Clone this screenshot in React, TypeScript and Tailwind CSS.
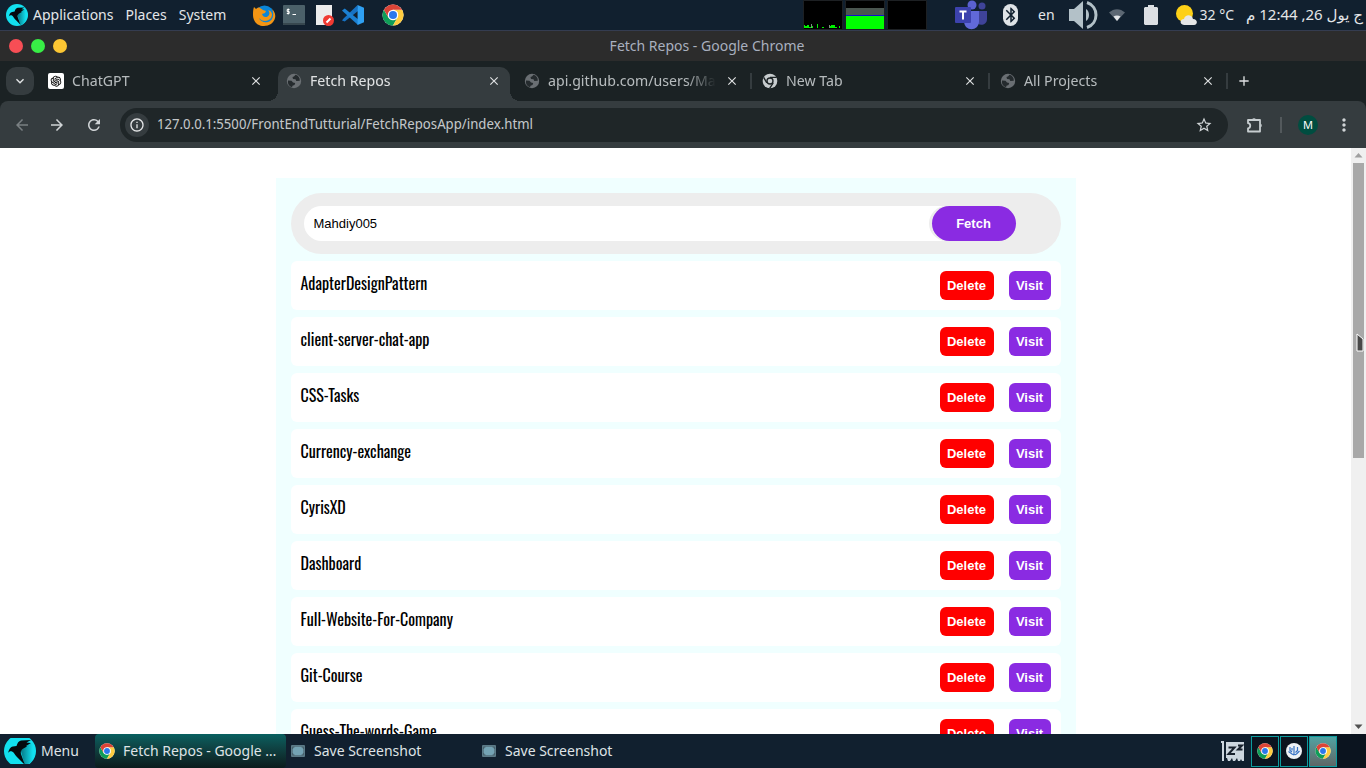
import type { ReactNode } from "react";
import { AiOutlineOpenAI } from "react-icons/ai";
import {
  MdAdd,
  MdArrowBack,
  MdArrowForward,
  MdBluetooth,
  MdClose,
  MdKeyboardArrowDown,
  MdMoreVert,
  MdOutlineInfo,
  MdRefresh,
  MdStarBorder,
} from "react-icons/md";

const repos = [
  "AdapterDesignPattern",
  "client-server-chat-app",
  "CSS-Tasks",
  "Currency-exchange",
  "CyrisXD",
  "Dashboard",
  "Full-Website-For-Company",
  "Git-Course",
  "Guess-The-words-Game",
];

function ChromeLogo({ className }: { className: string }) {
  return (
    <svg viewBox="0 0 48 48" className={className} aria-hidden="true">
      <circle cx="24" cy="24" r="23" fill="#fff" />
      <path d="M4.1 12.5A23 23 0 0 0 24 47l10-17.3-10 4.8-10-4.8z" fill="#0f9d58" />
      <path d="M43.9 12.5A23 23 0 0 1 24 47l10-17.3 0-11.5-10-5.7z" fill="#ffcd40" />
      <path d="M24 12.5h19.9A23 23 0 0 0 4.1 12.5L14 29.7z" fill="#db4437" />
      <circle cx="24" cy="24" r="11.5" fill="#fff" />
      <circle cx="24" cy="24" r="8.8" fill="#2a78ec" />
    </svg>
  );
}

function ChromeMono() {
  return (
    <svg viewBox="0 0 24 24" className="size-4 shrink-0" aria-hidden="true">
      <circle cx="12" cy="12" r="11" fill="#c7ccce" />
      <path d="M12 6.500h10M7.200 14.700 2.500 6.500M16.800 14.700 11.500 23" stroke="#1b2224" strokeWidth="2" />
      <circle cx="12" cy="12" r="5.500" fill="#1b2224" />
      <circle cx="12" cy="12" r="3.500" fill="#c7ccce" />
    </svg>
  );
}

function Globe() {
  return (
    <svg viewBox="0 0 16 16" className="size-4 shrink-0" aria-hidden="true">
      <circle cx="8" cy="8" r="7.200" fill="#6a6f73" />
      <path
        d="M9.500 1.800 8 3.500 6.500 4l.5 2 2.500.3.8 1.700 3.500-.3A6 6 0 0 0 9.500 1.800zM2 7.500l3.500.3 1.500 1.700 2.200.5-.7 2-2 .8-.5 1.400A6.200 6.200 0 0 1 2 7.500z"
        fill="#252b2e"
      />
    </svg>
  );
}

function ParrotLogo({ id, className }: { id: string; className: string }) {
  return (
    <svg viewBox="0 0 32 32" className={className} aria-hidden="true">
      <defs>
        <linearGradient id={id} x1="0" x2="1" y1="0" y2="0">
          <stop offset="0" stopColor="#056f7c" />
          <stop offset="0.85" stopColor="#12e0ef" />
        </linearGradient>
      </defs>
      <circle cx="16" cy="16" r="16" fill="#12e0ef" />
      <path d="M16 13 29 8A16 16 0 0 1 21 31z" fill={`url(#${id})`} />
      <path
        d="M4 18C5 15 6 12 9 11.500L12.500 11C13.500 8 14.500 6 17 5.500L27 5 22.500 7.500 27 8 22 11l1 .5-4.500 2.500C17 15.500 16.500 17 17 19L21 30 12.500 21.500C10.500 19.500 10 17 8 16.500 6.500 16 5 16.500 4 18z"
        fill="#05090d"
      />
    </svg>
  );
}

function FirefoxLogo() {
  return (
    <svg viewBox="0 0 24 24" className="size-6" aria-hidden="true">
      <circle cx="12.500" cy="12" r="9.500" fill="#0b86d8" />
      <path
        d="M2 4l2 2c1-1 3-2 4-1l3 2 3 1-1 2-3 1 1 2c2 2 5 1 6-1 1-2 0-4-1-5 4 1 5 5 3 8-3 4-9 4-12 0 1 3 5 5 9 4 6-2 6-9 4-13 2 2 4 5 3 9-1 5-6 8-11 8C5 23 1 18 1 12c0-3 0-5 1-8z"
        fill="#f39514"
      />
    </svg>
  );
}

function TerminalIcon() {
  return (
    <svg viewBox="0 0 22 20" className="h-5 w-[22px]" aria-hidden="true">
      <rect width="22" height="20" rx="1" fill="#4b6069" />
      <path d="M0 18h22v1a1 1 0 0 1-1 1H1a1 1 0 0 1-1-1z" fill="#37474f" />
      <path d="M6.500 4.500H4.200v2h2v2H3.800M5.200 3.500v6M9.500 9.500h3.500" stroke="#fff" fill="none" />
    </svg>
  );
}

function DocumentIcon() {
  return (
    <svg viewBox="0 0 18 21" className="h-[21px] w-[18px]" aria-hidden="true">
      <path d="M0 0h16v20H0z" fill="#ececec" />
      <circle cx="12.500" cy="15.500" r="5.500" fill="#f03a32" />
      <path d="m10.500 17.500 4-4" stroke="#fff" strokeWidth="2" />
    </svg>
  );
}

function VsCodeLogo() {
  return (
    <svg viewBox="0 0 24 24" className="size-[22px]" aria-hidden="true">
      <path d="M17 1 2 15.500 0 18l3 1L17.500 7.500z" fill="#1672c4" />
      <path d="m0 7 3-2 14.500 11.500V23L2 9z" fill="#1b80d2" />
      <path d="m17 1 7 3v16l-7 3z" fill="#2fa0f3" />
    </svg>
  );
}

function Graph({ children }: { children?: ReactNode }) {
  return (
    <svg viewBox="0 0 40 30" className="h-[30px] w-10" aria-hidden="true">
      <path d="M.5 .5h39v29H.5z" fill="#000" stroke="#1d2023" />
      {children}
    </svg>
  );
}

function TeamsIcon() {
  return (
    <svg viewBox="0 0 32 30" className="h-[30px] w-8" aria-hidden="true">
      <circle cx="27" cy="6" r="3.500" fill="#3f4399" />
      <path d="M22 11h10v8c0 5-5 7-9 5z" fill="#3f4399" />
      <circle cx="17" cy="5" r="4.500" fill="#5a61d0" />
      <path d="M9 11h15v10c0 11-15 11-15 0z" fill="#6169d8" />
      <rect y="7" width="16" height="16" rx="1" fill="#3c42ad" />
      <path d="M4.500 11.500h7M8 11.500v8" stroke="#fff" strokeWidth="2" />
    </svg>
  );
}

function SpeakerIcon() {
  return (
    <svg viewBox="0 0 30 30" className="size-[30px]" aria-hidden="true">
      <path d="M0 9h5l9-8v28l-9-8H0z" fill="#b3c1c8" />
      <path d="M17 9c4 2 4 10 0 12z" fill="#b3c1c8" />
      <path d="M18 2.500c12 4 12 21 0 25" fill="none" stroke="#b3c1c8" strokeWidth="3" />
    </svg>
  );
}

function WifiIcon() {
  return (
    <svg viewBox="0 0 16 12" className="h-3 w-4" aria-hidden="true">
      <path d="M0 3.500c5-4.500 11-4.500 16 0L8 12z" fill="#5c6773" />
      <path d="M4.500 7.500c2-1.500 5-1.500 7 0L8 12z" fill="#e3e6e9" />
    </svg>
  );
}

function BatteryIcon() {
  return (
    <svg viewBox="0 0 14 20" className="h-5 w-3.5" aria-hidden="true">
      <path d="M4 0h6v2h3l1 1v16l-1 1H1l-1-1V3l1-1h3z" fill="#dcdfe3" />
    </svg>
  );
}

function WeatherIcon() {
  return (
    <svg viewBox="0 0 22 20" className="h-5 w-[22px]" aria-hidden="true">
      <circle cx="8.500" cy="8.500" r="8.500" fill="#fdd017" />
      <path d="M8 20c-5-1-4-6 0-6 1-5 8-5 9 0 5 0 5 6 1 6z" fill="#e6e6e6" />
    </svg>
  );
}

function PuzzleIcon() {
  return (
    <svg viewBox="0 0 18 18" className="size-[18px]" aria-hidden="true">
      <path
        d="M2 4h12v11.500H2v-3.200c3-.4 3-4.700 0-5.100z"
        fill="none"
        stroke="#c7cdd0"
        strokeWidth="1.800"
        strokeLinejoin="round"
      />
      <path d="M6 3.500a2.200 2.200 0 0 1 4 0zM14.500 7.500a2.200 2.200 0 0 1 0 4z" fill="#c7cdd0" />
    </svg>
  );
}

function ScreenshotIcon() {
  return (
    <svg viewBox="0 0 14 12" className="h-3 w-3.5 shrink-0" aria-hidden="true">
      <rect width="14" height="12" rx="1" fill="#5b7a87" />
      <path d="M3 2h8l1 2v4l-1 2H3L2 8V4z" fill="#74a3b4" />
      <path d="M1.500 4V2h2M10.500 2h2v2M12.500 8v2h-2M3.500 10h-2V8" fill="none" stroke="#48626e" />
    </svg>
  );
}

function SleepIcon() {
  return (
    <svg viewBox="0 0 24 20" className="h-5 w-6" aria-hidden="true">
      <path d="M0 0h3v20H1V2H0zM5 1h18v19h-2l-1-2-1 2h-2l-1-3-2 3h-2l-1-3-2 3H7l-1-3H5z" fill="#ccd6df" />
      <path d="M7.500 6.500h6l-6 6.500h6.500M17 4.500h4l-4 4h4.500" fill="none" stroke="#17212d" strokeWidth="2" />
    </svg>
  );
}

function WindowIcon() {
  return (
    <svg viewBox="0 0 16 16" className="size-4" aria-hidden="true">
      <circle cx="8" cy="8" r="8" fill="#eef2f6" />
      <path
        d="M4 4v3.500l2 1.500M2.500 8.500 6 11l2 1M8 3v9M11.500 4v3.500l-2 2M13.500 8l-3 3-2 1M6 5v2.500"
        fill="none"
        stroke="#3772c4"
        strokeWidth="1.200"
      />
    </svg>
  );
}

function SystemPanel() {
  return (
    <header className="flex h-[31px] shrink-0 items-center justify-between border-b border-[#343c50] bg-[#11202f] text-sm text-[#e4e6e8]">
      <div className="flex items-center">
        <ParrotLogo id="parrot-top" className="ml-1.5 size-[22px]" />
        <nav className="ml-[5px] flex gap-3">
          <button type="button">Applications</button>
          <button type="button">Places</button>
          <button type="button">System</button>
        </nav>
        <div className="ml-[26px] flex items-center">
          <button type="button" aria-label="Firefox"><FirefoxLogo /></button>
          <button type="button" aria-label="Terminal" className="ml-[7px]"><TerminalIcon /></button>
          <button type="button" aria-label="Text editor" className="ml-[11px]"><DocumentIcon /></button>
          <button type="button" aria-label="Code editor" className="ml-2"><VsCodeLogo /></button>
          <button type="button" aria-label="Chrome" className="ml-[18px]"><ChromeLogo className="size-[22px]" /></button>
        </div>
      </div>
      <div className="flex items-center">
        <div className="flex gap-0.5">
          <Graph>
            <path
              d="M1 28v-3h1v1h2v-1h2v2h3v-1h1v2zM14 28v-4h1v4zM19 28v-1h2v1zM26 28v-2h2v-1h4v2h2v1zM36 28v-2h1v2z"
              fill="#00f000"
            />
            <path d="M8 28v-4h1v4zM26 28v-3h1v3z" fill="#7d8f80" />
          </Graph>
          <Graph>
            <path d="M1 8h38v7H1z" fill="#4a5650" />
            <path d="M1 15h38v1H1z" fill="#1010d0" />
            <path d="M1 16h38v13H1z" fill="#00ff00" />
          </Graph>
          <Graph />
        </div>
        <span className="ml-7"><TeamsIcon /></span>
        <span className="ml-4 flex h-[22px] w-[15px] items-center justify-center rounded-full bg-[#dfe3e7] text-[#11202f]">
          <MdBluetooth className="size-[18px] shrink-0" />
        </span>
        <span className="ml-5">en</span>
        <span className="ml-3.5"><SpeakerIcon /></span>
        <span className="ml-2.5"><WifiIcon /></span>
        <span className="ml-[19px]"><BatteryIcon /></span>
        <span className="ml-[18px]"><WeatherIcon /></span>
        <span className="ml-0.5">32 °C</span>
        <time dir="rtl" className="mr-[3px] ml-3 text-[15px] whitespace-nowrap">ج يول 26, 12:44 م</time>
      </div>
    </header>
  );
}

function TitleBar() {
  return (
    <div className="grid h-[30px] shrink-0 grid-cols-[1fr_auto_1fr] items-center bg-[#2c2c2c]">
      <div className="flex gap-2 pl-[9px]">
        <button type="button" aria-label="Close window" className="size-3.5 rounded-full bg-[#f74e55]" />
        <button type="button" aria-label="Maximize window" className="size-3.5 rounded-full bg-[#38ee46]" />
        <button type="button" aria-label="Minimize window" className="size-3.5 rounded-full bg-[#fcc633]" />
      </div>
      <div className="pl-12 text-sm text-[#a9b0bf]">Fetch Repos - Google Chrome</div>
    </div>
  );
}

type TabProps = { icon: ReactNode; title: string; active?: boolean; divider?: boolean };

function Tab({ icon, title, active, divider }: TabProps) {
  return (
    <div className="relative flex h-[34px] w-[238px] min-w-0 shrink pr-1.5">
      {active && (
        <>
          <span className="absolute bottom-0 -left-2.5 size-2.5 bg-[radial-gradient(circle_at_0_0,#1b2224_10px,#353c3f_10px)]" />
          <span className="absolute right-[-4px] bottom-0 size-2.5 bg-[radial-gradient(circle_at_100%_0,#1b2224_10px,#353c3f_10px)]" />
        </>
      )}
      <div
        className={
          active
            ? "flex min-w-0 flex-1 items-center gap-2 rounded-t-[10px] bg-[#353c3f] pr-2 pb-1.5 pl-2 text-[#dfe1e2]"
            : "flex min-w-0 flex-1 items-center gap-2 pr-2 pb-1.5 pl-2 text-[#b5babc]"
        }
      >
        {icon}
        <span className="min-w-0 flex-1 overflow-hidden [mask-image:linear-gradient(to_right,black_calc(100%-30px),transparent)] pb-0.5 font-['Noto_Sans_Display','Noto_Sans',sans-serif] text-[15px] whitespace-nowrap">
          {title}
        </span>
        <button type="button" aria-label={`Close ${title}`} className="flex size-4 items-center justify-center text-[#dfe1e2]">
          <MdClose className="size-3.5" />
        </button>
      </div>
      {divider && <span className="absolute top-1.5 right-[2px] h-4 w-0.5 bg-[#353c3f]" />}
    </div>
  );
}

function BrowserChrome() {
  return (
    <>
      <TitleBar />
      <div className="flex h-10 shrink-0 items-end bg-[#1b2224] pl-1.5">
        <button
          type="button"
          aria-label="Search tabs"
          className="mr-1.5 mb-1.5 flex size-7 shrink-0 items-center justify-center rounded-[10px] bg-[#353c3f] text-[#e3e5e6]"
        >
          <MdKeyboardArrowDown className="size-4" />
        </button>
        <Tab
          title="ChatGPT"
          icon={
            <span className="flex size-4 shrink-0 items-center justify-center rounded-xs bg-white text-black">
              <AiOutlineOpenAI className="size-3.5" />
            </span>
          }
        />
        <Tab title="Fetch Repos" icon={<Globe />} active />
        <Tab title="api.github.com/users/Mahdiy005" icon={<Globe />} divider />
        <Tab title="New Tab" icon={<ChromeMono />} divider />
        <Tab title="All Projects" icon={<Globe />} divider />
        <button type="button" aria-label="New tab" className="mb-3 ml-1.5 text-[#dfe1e2]">
          <MdAdd className="size-4" />
        </button>
      </div>
      <div className="bg-[#1b2224]">
        <div className="flex h-[47px] items-center rounded-t-lg bg-[#353c3f] text-[#d0d4d6]">
          <button type="button" aria-label="Back" className="ml-[13px] text-[#7a8083]"><MdArrowBack className="size-[18px]" /></button>
          <button type="button" aria-label="Forward" className="ml-[17px]"><MdArrowForward className="size-[18px]" /></button>
          <button type="button" aria-label="Reload" className="ml-[19px]"><MdRefresh className="size-[18px]" /></button>
          <div className="ml-[17px] flex h-[34px] flex-1 items-center rounded-full bg-[#1f2628] pr-[15px] pl-[5px]">
            <button
              type="button"
              aria-label="Site information"
              className="flex size-6 items-center justify-center rounded-full bg-[#353c3f] text-[#e3e5e6]"
            >
              <MdOutlineInfo className="size-4" />
            </button>
            <input
              aria-label="Address"
              defaultValue="127.0.0.1:5500/FrontEndTutturial/FetchReposApp/index.html"
              className="ml-2 min-w-0 flex-1 bg-transparent pb-0.5 font-['Noto_Sans_Display','Noto_Sans',sans-serif] text-sm text-[#c3c7c9] outline-none"
            />
            <button type="button" aria-label="Bookmark this page"><MdStarBorder className="size-[18px]" /></button>
          </div>
          <button type="button" aria-label="Extensions" className="ml-[18px]"><PuzzleIcon /></button>
          <span className="ml-4 h-4 w-0.5 bg-[#53595c]" />
          <button type="button" aria-label="Profile" className="ml-4 size-5 rounded-full bg-[#004d40] text-[11px] leading-5 text-white">
            M
          </button>
          <button type="button" aria-label="Menu" className="mr-3 ml-4"><MdMoreVert className="size-5" /></button>
        </div>
      </div>
    </>
  );
}

function RepoRow({ name }: { name: string }) {
  return (
    <li className="flex h-[49px] items-start rounded-md bg-white p-2.5">
      <span className="flex-1 font-['Oswald','Liberation_Sans_Narrow','Roboto_Condensed',sans-serif] text-base leading-6 text-black">
        {name}
      </span>
      <div className="flex gap-[15px] text-[13px] leading-[15px] font-bold text-white">
        <button type="button" className="h-[29px] w-[54px] rounded-md bg-[#ff0000]">Delete</button>
        <a href={`#${name}`} className="flex h-[29px] w-[42px] items-center justify-center rounded-md bg-[#8a2be2]">
          Visit
        </a>
      </div>
    </li>
  );
}

function RepoPage() {
  return (
    <div className="flex min-h-0 flex-1 bg-white">
      <main className="min-w-0 flex-1 overflow-hidden pt-[30px] font-['Liberation_Sans',Arial,sans-serif]">
        <div className="mx-auto flex w-full max-w-[800px] flex-col gap-[7px] bg-[#f0ffff] p-[15px]">
          <form className="flex h-[61px] items-center rounded-full bg-[#ededed] pr-[45px] pl-[13px]" onSubmit={(e) => e.preventDefault()}>
            <input
              aria-label="GitHub username"
              defaultValue="Mahdiy005"
              className="h-[35px] min-w-0 flex-1 rounded-l-full bg-white px-2.5 text-[13px] text-black outline-none"
            />
            <button
              type="submit"
              className="-ml-3 h-[35px] w-[84px] rounded-full bg-[#8a2be2] text-[13px] font-bold text-white shadow-[-3px_0_0_#ededed]"
            >
              Fetch
            </button>
          </form>
          <ul className="flex flex-col gap-[7px]">
            {repos.map((name) => (
              <RepoRow key={name} name={name} />
            ))}
          </ul>
        </div>
      </main>
      <div className="relative flex w-[15px] flex-col items-center justify-between bg-[#f0f0f0]" aria-hidden="true">
        <svg viewBox="0 0 15 15" className="size-[15px]"><path d="m7.500 5 4 4.500h-8z" fill="#a0a0a0" /></svg>
        <div className="w-[11px] flex-1">
          <div className="h-[53%] bg-[#a8a8a8]" />
        </div>
        <svg viewBox="0 0 15 15" className="size-[15px]"><path d="m7.500 10 4-4.500h-8z" fill="#505050" /></svg>
        <svg viewBox="0 0 8 20" className="absolute top-[185px] left-[5px] h-5 w-2">
          <path d="M1 1v17h6V6z" fill="#484848" stroke="#fff" />
        </svg>
      </div>
    </div>
  );
}

function TaskBar() {
  return (
    <footer className="flex h-[34px] shrink-0 items-center justify-between bg-[#11202f] text-sm text-[#dfe3e6]">
      <div className="flex h-full items-center">
        <button type="button" className="ml-1 flex w-[91px] items-center gap-[5px]">
          <span className="flex h-[26px] w-8 items-center justify-center overflow-hidden">
            <ParrotLogo id="parrot-menu" className="size-8 shrink-0" />
          </span>
          Menu
        </button>
        <button
          type="button"
          className="flex h-full w-[191px] items-center gap-2 rounded-sm bg-linear-to-b from-[#086060] to-[#0b1c1d] px-1"
        >
          <ChromeLogo className="size-4 shrink-0" />
          <span className="truncate">Fetch Repos - Google Chrome</span>
        </button>
        <button type="button" className="flex h-full w-[191px] items-center gap-[9px] px-[5px]">
          <ScreenshotIcon />
          Save Screenshot
        </button>
        <button type="button" className="flex h-full w-[191px] items-center gap-[9px] px-[5px]">
          <ScreenshotIcon />
          Save Screenshot
        </button>
      </div>
      <div className="flex h-full items-center">
        <SleepIcon />
        <div className="ml-1.5 flex h-full items-center gap-px bg-[#0b141f] pr-[29px]">
          <button type="button" aria-label="Workspace 1" className="flex h-[31px] w-7 items-center justify-center border border-[#0c9b9e]">
            <ChromeLogo className="size-4" />
          </button>
          <button type="button" aria-label="Workspace 2" className="flex h-[31px] w-7 items-center justify-center border border-[#0c9b9e]">
            <WindowIcon />
          </button>
          <button
            type="button"
            aria-label="Workspace 3"
            className="flex h-[31px] w-7 items-center justify-center border border-[#0c9b9e] bg-linear-to-b from-[#4fa3a3] to-[#5c6666]"
          >
            <ChromeLogo className="size-4" />
          </button>
        </div>
      </div>
    </footer>
  );
}

export default function App() {
  return (
    <div className="flex h-screen flex-col overflow-hidden font-['Noto_Sans','DejaVu_Sans',sans-serif]">
      <SystemPanel />
      <BrowserChrome />
      <RepoPage />
      <TaskBar />
    </div>
  );
}
